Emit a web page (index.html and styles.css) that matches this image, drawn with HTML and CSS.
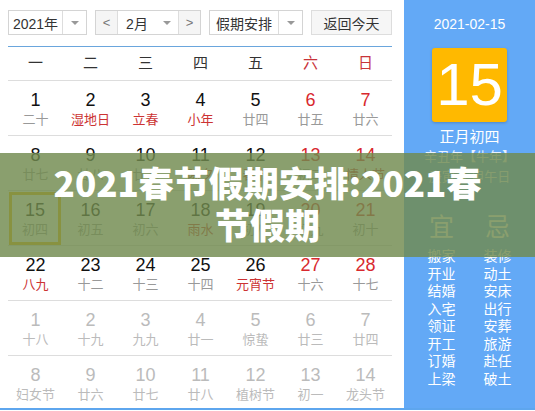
FILE: index.html
```html
<!DOCTYPE html>
<html lang="zh-CN">

<head>
    <meta charset="UTF-8">
    <meta name="viewport" content="width=device-width, initial-scale=1.0">
    <title>2021春节假期安排</title>
    <link rel="stylesheet" href="styles.css">
</head>

<body>
    <div class="calendar">
        <div class="cal-main">
            <div class="toolbar">
                <div class="select year">
                    <span class="select-text">2021年</span>
                    <span class="select-arrow"></span>
                </div>
                <div class="select month">
                    <span class="month-btn">&lt;</span>
                    <span class="select-text">2月</span>
                    <span class="select-arrow plain"></span>
                    <span class="month-btn">&gt;</span>
                </div>
                <div class="select holiday">
                    <span class="select-text">假期安排</span>
                    <span class="select-arrow"></span>
                </div>
                <button class="today-btn">返回今天</button>
            </div>
            <ul class="week-head">
                <li>一</li>
                <li>二</li>
                <li>三</li>
                <li>四</li>
                <li>五</li>
                <li class="weekend">六</li>
                <li class="weekend">日</li>
            </ul>
            <div class="days">
                <div class="week">
                    <div class="day"><b>1</b><span>二十</span></div>
                    <div class="day"><b>2</b><span class="fest">湿地日</span></div>
                    <div class="day"><b>3</b><span class="fest">立春</span></div>
                    <div class="day"><b>4</b><span class="fest">小年</span></div>
                    <div class="day"><b>5</b><span>廿四</span></div>
                    <div class="day weekend"><b>6</b><span>廿五</span></div>
                    <div class="day weekend"><b>7</b><span>廿六</span></div>
                </div>
                <div class="week">
                    <div class="day"><b>8</b><span>廿七</span></div>
                    <div class="day"><b>9</b><span>廿八</span></div>
                    <div class="day"><b>10</b><span>廿九</span></div>
                    <div class="day"><b>11</b><span class="fest">除夕</span></div>
                    <div class="day"><b>12</b><span class="fest">春节</span></div>
                    <div class="day weekend"><b>13</b><span>初二</span></div>
                    <div class="day weekend"><b>14</b><span class="fest">情人节</span></div>
                </div>
                <div class="week">
                    <div class="day today"><b>15</b><span>初四</span></div>
                    <div class="day"><b>16</b><span>初五</span></div>
                    <div class="day"><b>17</b><span>初六</span></div>
                    <div class="day"><b>18</b><span class="fest">雨水</span></div>
                    <div class="day"><b>19</b><span>初八</span></div>
                    <div class="day weekend"><b>20</b><span>初九</span></div>
                    <div class="day weekend"><b>21</b><span>初十</span></div>
                </div>
                <div class="week">
                    <div class="day"><b>22</b><span class="fest">八九</span></div>
                    <div class="day"><b>23</b><span>十二</span></div>
                    <div class="day"><b>24</b><span>十三</span></div>
                    <div class="day"><b>25</b><span>十四</span></div>
                    <div class="day"><b>26</b><span class="fest">元宵节</span></div>
                    <div class="day weekend"><b>27</b><span>十六</span></div>
                    <div class="day weekend"><b>28</b><span>十七</span></div>
                </div>
                <div class="week other">
                    <div class="day"><b>1</b><span>十八</span></div>
                    <div class="day"><b>2</b><span>十九</span></div>
                    <div class="day"><b>3</b><span>九九</span></div>
                    <div class="day"><b>4</b><span>廿一</span></div>
                    <div class="day"><b>5</b><span>惊蛰</span></div>
                    <div class="day"><b>6</b><span>廿三</span></div>
                    <div class="day"><b>7</b><span>廿四</span></div>
                </div>
                <div class="week other">
                    <div class="day"><b>8</b><span>妇女节</span></div>
                    <div class="day"><b>9</b><span>廿六</span></div>
                    <div class="day"><b>10</b><span>廿七</span></div>
                    <div class="day"><b>11</b><span>廿八</span></div>
                    <div class="day"><b>12</b><span>植树节</span></div>
                    <div class="day"><b>13</b><span>初一</span></div>
                    <div class="day"><b>14</b><span>龙头节</span></div>
                </div>
            </div>
        </div>
        <div class="cal-side">
            <p class="side-date">2021-02-15</p>
            <div class="side-day">15</div>
            <p class="side-lunar">正月初四</p>
            <p class="side-year">辛丑年【牛年】</p>
            <p class="side-year">庚寅月 甲午日</p>
            <div class="yiji">
                <div class="yiji-col">
                    <h3>宜</h3>
                    <span>搬家</span>
                    <span>开业</span>
                    <span>结婚</span>
                    <span>入宅</span>
                    <span>领证</span>
                    <span>开工</span>
                    <span>订婚</span>
                    <span>上梁</span>
                </div>
                <div class="yiji-col">
                    <h3>忌</h3>
                    <span>装修</span>
                    <span>动土</span>
                    <span>安床</span>
                    <span>出行</span>
                    <span>安葬</span>
                    <span>旅游</span>
                    <span>赴任</span>
                    <span>破土</span>
                </div>
            </div>
        </div>
    </div>

    <div class="banner">
        <h1>2021春节假期安排:2021春节假期</h1>
    </div>
</body>

</html>
```

FILE: styles.css
```css
* {
    box-sizing: border-box;
}

body {
    margin: 0;
    font-family: "Liberation Sans", "Noto Sans CJK SC", sans-serif;
    color: #333;
    background: #fff;
}

.calendar {
    position: relative;
    display: flex;
    width: 535px;
    height: 410px;
    border-bottom: 2px solid #5ea6ee;
    overflow: hidden;
}

.cal-main {
    width: 404px;
    padding: 10px 12px 0 8px;
}

.toolbar {
    display: flex;
    height: 25px;
    gap: 8px;
    padding-bottom: 11px;
    box-sizing: content-box;
    border-bottom: 1px solid #6aa6dd;
}

.select {
    display: flex;
    align-items: center;
    height: 25px;
    border: 1px solid #d4d4d4;
    font-size: 14px;
    color: #333;
}

.select-text {
    flex: 1;
    text-align: center;
}

.select-arrow {
    width: 24px;
    height: 100%;
    border-left: 1px solid #ddd;
    display: flex;
    align-items: center;
    justify-content: center;
}

.select-arrow::after {
    content: "";
    border-left: 4px solid transparent;
    border-right: 4px solid transparent;
    border-top: 4px solid #999;
}

.select-arrow.plain {
    border-left: none;
    width: 22px;
}

.year {
    width: 79px;
}

.month {
    width: 106px;
}

.month-btn {
    width: 22px;
    height: 100%;
    display: flex;
    align-items: center;
    justify-content: center;
    background: #f5f5f5;
    color: #777;
    font-size: 13px;
}

.month-btn:first-child {
    border-right: 1px solid #ddd;
}

.month-btn:last-child {
    border-left: 1px solid #ddd;
}

.holiday {
    width: 94px;
}

.today-btn {
    width: 81px;
    height: 25px;
    border: 1px solid #ddd;
    background: #f6f6f6;
    font-family: inherit;
    font-size: 14px;
    color: #333;
    padding: 0;
}

.week-head {
    display: grid;
    grid-template-columns: repeat(7, 55px);
    margin: 0;
    padding: 0;
    list-style: none;
    height: 34px;
    border-bottom: 1px solid #ddd;
}

.week-head li {
    text-align: center;
    line-height: 32px;
    font-size: 15px;
    color: #333;
}

.week-head li.weekend {
    color: #c8343a;
}

.week {
    display: grid;
    grid-template-columns: repeat(7, 55px);
    height: 55px;
    border-bottom: 1px solid #ddd;
}

.week:last-child {
    border-bottom: none;
    height: 52px;
}

.day {
    display: flex;
    flex-direction: column;
    align-items: center;
    padding-top: 9px;
}

.day b {
    font-weight: normal;
    font-size: 18px;
    line-height: 20px;
    color: #111;
}

.day span {
    font-size: 13px;
    line-height: 20px;
    color: #999;
}

.day span.fest {
    color: #cc3333;
}

.day.weekend b {
    color: #d8282e;
}

.day.today {
    box-shadow: inset 0 0 0 3px #f0b400;
    margin: 1px 2px 0 1px;
    padding-top: 8px;
}

.week.other .day b,
.week.other .day span {
    color: #bbb;
}

.cal-side {
    flex: 1;
    background: #63a9f6;
    color: #fff;
    display: flex;
    flex-direction: column;
    align-items: center;
}

.cal-side p {
    margin: 0;
}

.side-date {
    font-size: 14px;
    margin-top: 15px !important;
    line-height: 18px;
}

.side-day {
    width: 75px;
    height: 74px;
    margin-top: 15px;
    background: #ffb900;
    border-radius: 3px;
    box-shadow: 0 1px 3px rgba(0, 0, 0, 0.2);
    font-size: 60px;
    line-height: 74px;
    text-align: center;
}

.side-lunar {
    font-size: 15px;
    line-height: 20px;
    margin-top: 5px !important;
}

.side-year {
    font-size: 13px;
    line-height: 20px;
    color: #e8f2ff;
}

.yiji {
    display: grid;
    grid-template-columns: 56px 56px;
    margin-top: 24px;
}

.yiji-col {
    display: flex;
    flex-direction: column;
    align-items: center;
}

.yiji-col h3 {
    margin: 0 0 5px;
    font-size: 25px;
    line-height: 32px;
    font-weight: normal;
}

.yiji-col span {
    font-size: 14px;
    line-height: 17.5px;
}

.banner {
    position: absolute;
    left: 0;
    top: 153px;
    width: 535px;
    height: 104px;
    background: rgba(112, 138, 78, 0.82);
    padding-top: 8px;
}

.banner h1 {
    width: 440px;
    margin: 0 auto;
    color: #fff;
    text-align: center;
    font-family: "Noto Sans CJK SC", sans-serif;
    font-weight: 900;
    font-size: 35px;
    line-height: 42px;
}
```
